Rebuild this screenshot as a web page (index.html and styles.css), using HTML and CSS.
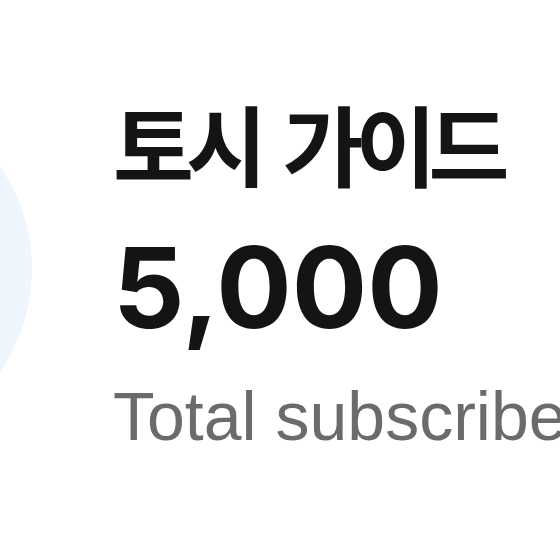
FILE: index.html
```html
<!DOCTYPE html>
<html lang="ko">
<head>
<meta charset="utf-8">
<link rel="stylesheet" href="styles.css">
</head>
<body>
<div class="card">
  <div class="avatar"></div>
  <div class="info">
    <div class="name">토시 가이드</div>
    <div class="count">5,000</div>
    <div class="label">Total subscribers</div>
  </div>
</div>
</body>
</html>
```
FILE: styles.css
```css
html, body {
  margin: 0;
  padding: 0;
  background: #ffffff;
  overflow: hidden;
}
.card {
  display: flex;
  align-items: center;
  gap: 81px;
  margin-left: -328px;
  padding-top: 89px;
  white-space: nowrap;
}
.avatar {
  flex: none;
  width: 360px;
  height: 360px;
  margin-bottom: 10px;
  border-radius: 50%;
  background: #eef5fd;
}
.info {
  display: flex;
  flex-direction: column;
}
.name {
  font-family: "Noto Sans CJK KR", sans-serif;
  font-weight: 700;
  font-size: 88px;
  line-height: 100px;
  letter-spacing: -8px;
  word-spacing: 7px;
  color: #141414;
}
.count {
  font-family: "Inter", "Liberation Sans", sans-serif;
  font-weight: 700;
  font-size: 112px;
  line-height: 100px;
  color: #141414;
  margin-top: 45px;
}
.label {
  font-family: "Liberation Sans", Arial, sans-serif;
  font-size: 68px;
  line-height: 80px;
  color: #6b6b6b;
  margin-top: 39px;
}
```
